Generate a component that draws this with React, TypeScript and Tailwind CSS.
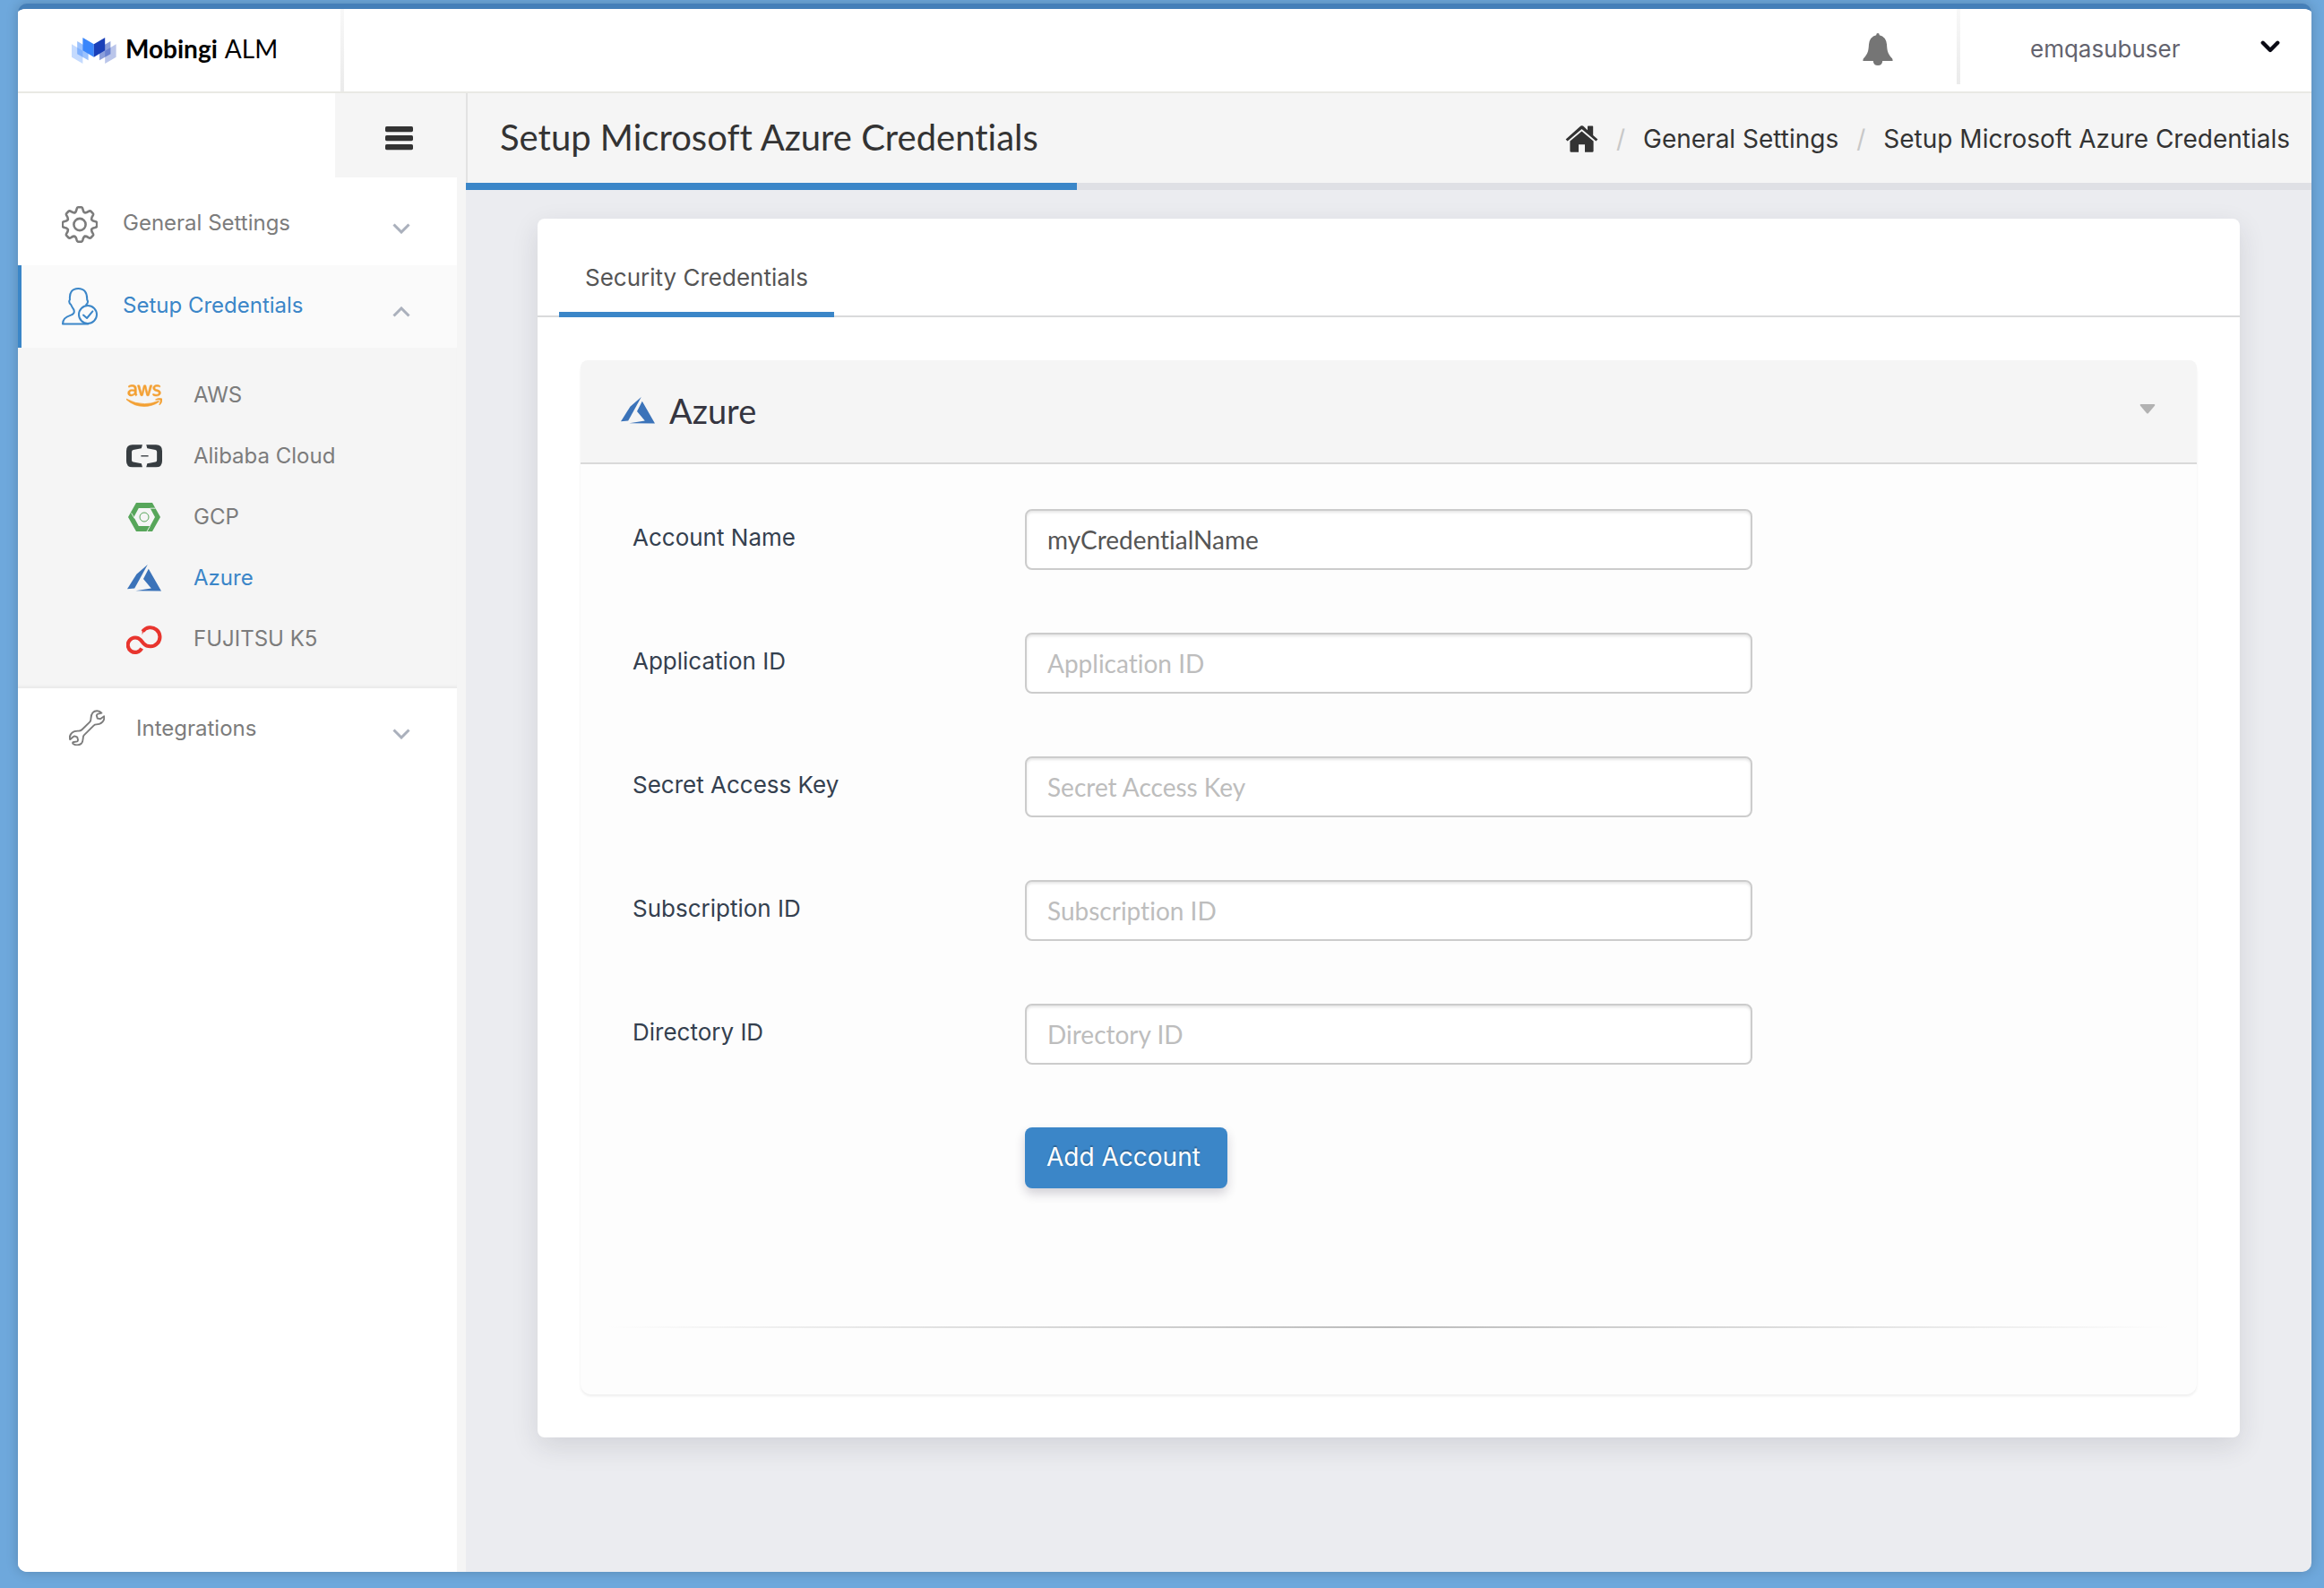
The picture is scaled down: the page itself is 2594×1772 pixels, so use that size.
import React from "react";
import { FaAws } from "react-icons/fa";

/* ---------- icons ---------- */

function MobingiMark() {
  return (
    <svg viewBox="0 0 50 29" className="h-[29px] w-[50px]" aria-hidden="true">
      <g fill="#3a86fb">
        <path d="M0 7.3 12.4 14.7V29L0 21.7Z" opacity=".3" />
        <path d="M6.2 4 18.6 11.3V25.3L6.2 18.3Z" opacity=".5" />
        <path d="M12.4 0 24.8 7.3V21.7L12.4 14.3Z" />
      </g>
      <g fill="#1a3fb8">
        <path d="M49.6 7.3 37.2 14.7V29L49.6 21.7Z" opacity=".3" />
        <path d="M43.4 4 31 11.3V25.3L43.4 18.3Z" opacity=".5" />
        <path d="M37.2 0 24.8 7.3V21.7L37.2 14.3Z" />
      </g>
    </svg>
  );
}

function BellIcon() {
  return (
    <svg viewBox="0 0 34 36" className="h-9 w-[34px]" fill="#757575" aria-hidden="true">
      <path d="M15.2 2.2Q15.2 0 17 0T18.8 2.2Q26.2 4 27 12.5C27.5 19.5 27.6 22.5 33 28.3Q33.6 29 33.6 31H.4Q.4 29 1 28.3C6.4 22.5 6.5 19.5 7 12.5Q7.8 4 15.2 2.2Z" />
      <path d="M11.8 31H22.2Q22 36 17 36T11.8 31Z" />
    </svg>
  );
}

function HomeIcon() {
  return (
    <svg viewBox="0 0 37 30" className="h-[30px] w-[37px]" fill="#333333" aria-hidden="true">
      <path d="M18.5.3Q19.4-.2 20.3.8L25 5.2V1.2Q25 .4 25.8.4H30.4Q31.2.4 31.2 1.2V10.9L36.4 15.6 34.4 17.4 18.5 3.9 2.6 17.4.6 15.6 16.8.9Q17.6.1 18.5.3Z" />
      <path d="M18.5 6.4 31.6 17.4V28.4Q31.6 29.8 30.2 29.8H22V21.2H15V29.8H6.8Q5.4 29.8 5.4 28.4V17.4Z" />
    </svg>
  );
}

function MenuIcon() {
  return (
    <svg viewBox="0 0 31 27" className="h-[27px] w-[31px]" fill="#333333" aria-hidden="true">
      <rect y="0" width="31" height="6.2" rx="1.6" />
      <rect y="10" width="31" height="6.2" rx="1.6" />
      <rect y="20" width="31" height="6.2" rx="1.6" />
    </svg>
  );
}

function ThickChevron() {
  return (
    <svg viewBox="0 0 22 14" className="h-3.5 w-[22px]" fill="none" stroke="#0a0a14" strokeWidth="4.4" strokeLinecap="round" strokeLinejoin="round" aria-hidden="true">
      <path d="M2.8 2.8 11 11 19.2 2.8" />
    </svg>
  );
}

function Chevron({ up = false }: { up?: boolean }) {
  return (
    <svg viewBox="0 0 20 12" className="h-3 w-5" fill="none" stroke="#aab0bc" strokeWidth="3" aria-hidden="true">
      <path d={up ? "M1.5 10.5 10 2 18.5 10.5" : "M1.5 1.5 10 10 18.5 1.5"} />
    </svg>
  );
}

function GearIcon() {
  const turn = (x: number, y: number, k: number) => {
    const a = (k * Math.PI) / 4;
    const px = 20 + x * Math.cos(a) - y * Math.sin(a);
    const py = 20.5 + x * Math.sin(a) + y * Math.cos(a);
    return `${px.toFixed(2)} ${py.toFixed(2)}`;
  };
  let d = "";
  for (let k = 0; k < 8; k++) {
    d += `${k ? "L" : "M"}${turn(-1.6, -19.2, k)}L${turn(1.6, -19.2, k)}`;
    d += `Q${turn(3, -19.2, k)} ${turn(3.5, -16.8, k)}`;
    d += `Q${turn(3.9, -14.4, k)} ${turn(5.4, -13.2, k)}`;
    d += `Q${turn(-3.9, -14.4, k + 1)} ${turn(-3.5, -16.8, k + 1)}`;
    d += `Q${turn(-3, -19.2, k + 1)} ${turn(-1.6, -19.2, k + 1)}`;
  }
  return (
    <svg viewBox="0 0 40 41" className="h-[41px] w-10" fill="none" stroke="currentColor" strokeWidth="2.6" strokeLinejoin="round" aria-hidden="true">
      <path d={`${d}Z`} />
      <circle cx="20" cy="20.5" r="6.6" />
    </svg>
  );
}

function UserCheckIcon() {
  return (
    <svg viewBox="0 0 40 42" className="h-[42px] w-10" fill="none" stroke="currentColor" strokeWidth="2" strokeLinejoin="round" strokeLinecap="round" aria-hidden="true">
      <path d="M27.2 19C29 17.5 29.6 15.5 28.2 13.4C28.4 5.5 25 1 18.3 1S8.2 5.5 9 13.2C7.4 15.6 8.6 17.6 10.2 19C11 21 12.2 22.8 13.4 24.6Q15 29.4 9.6 30.9C4 32.6 .9 35 1 40.6H29.4" />
      <circle cx="29" cy="30" r="10" />
      <path d="M24 30.6 28 34 34.4 26.4" />
    </svg>
  );
}

function WrenchIcon() {
  return (
    <svg viewBox="0 0 40 40" className="h-10 w-10" fill="none" stroke="currentColor" strokeWidth="1.9" strokeLinejoin="round" aria-hidden="true">
      <path d="M36.4 3.6C33.8.6 29 .4 26.4 3.4C24.6 5.6 24.6 7.8 24.4 10.4Q24.4 12.4 23 13.8L14.4 22.2Q13 23.6 11 23.6C8.2 23.8 5.8 23.6 3.6 25.4C1 27.6.4 30.6 1.2 33.2L4.6 30.2Q6 29.2 7.6 29.8L9.2 30.6 10 33.4Q10.2 34.8 9 35.4L4.4 36.2Q3.8 37.2 4.6 38C7.6 39.8 11.4 39.6 14 37.4C15.6 35.8 15.6 33.4 15.8 31Q15.8 29.4 17 28.2L27.6 17.6Q28.8 16.4 30.6 16.4C33.4 16.4 35.6 15.6 37.6 13.4C39.4 11.4 39.6 9.2 39.2 7.2L35 10.2 31.8 9.6 30.8 6.4Q31 5 32.4 4.6Z" />
    </svg>
  );
}

function AlibabaIcon() {
  return (
    <svg viewBox="0 0 41 26" className="h-[26px] w-[41px]" fill="#373d41" aria-hidden="true">
      <path d="M18.4 0H7Q0 0 0 7V18.6Q0 25.6 7 25.6H18.4L17.3 21.5 8 19.7Q6.2 19.3 6.2 17.5V8.1Q6.2 6.3 8 5.9L17.3 4Z" />
      <path d="M22.8 0H34Q41 0 41 7V18.6Q41 25.6 34 25.6H22.8L23.9 21.5 33.2 19.7Q35 19.3 35 17.5V8.1Q35 6.3 33.2 5.9L23.9 4Z" />
      <rect x="16.8" y="12.1" width="8.4" height="1.4" />
    </svg>
  );
}

function GcpIcon() {
  return (
    <svg viewBox="0 0 36 32" className="h-8 w-9" aria-hidden="true">
      <path fillRule="evenodd" fill="#57a65a" d="M9 0H27L36 16 27 32H9L0 16ZM11.8 6 6.4 16 11.8 26H24.6L30 16 24.6 6Z" />
      <path d="M24.6 6.2H30.6M3.6 11.4 7.2 17.6M21 32 24.4 26.2" stroke="#f5f5f5" strokeWidth=".9" />
      <circle cx="18" cy="16" r="5" fill="none" stroke="#57a65a" strokeWidth="1" />
    </svg>
  );
}

function AzureIcon() {
  return (
    <svg viewBox="0 0 38 30" className="h-[30px] w-[38px]" fill="#3b73b9" aria-hidden="true">
      <path d="M22.8 0 10.4 10.8 0 27.2 8.2 26.4Z" />
      <path d="M23.8 4.8 18 16 26.8 26.6 9.4 29.2 38 29.6Z" />
    </svg>
  );
}

function FujitsuIcon() {
  return (
    <svg viewBox="0 0 41 33" className="h-[33px] w-[41px]" fill="none" stroke="#e8352e" strokeWidth="4.2" aria-hidden="true">
      <path d="M18.8 7.4A10.8 10.8 0 1 1 19.8 21.2L16.4 17.2A8.4 8.4 0 1 0 17.6 26.8" />
      <path d="M18.1 4.8V11.5L19.8 7.6Z" fill="#e8352e" stroke="none" />
    </svg>
  );
}

/* ---------- data ---------- */

const providers = [
  { name: "AWS", icon: <FaAws className="size-[41px] text-[#f3a033]" stroke="#f3a033" strokeWidth="10" aria-hidden="true" />, active: false },
  { name: "Alibaba Cloud", icon: <AlibabaIcon />, active: false },
  { name: "GCP", icon: <GcpIcon />, active: false },
  { name: "Azure", icon: <AzureIcon />, active: true },
  { name: "FUJITSU K5", icon: <FujitsuIcon />, active: false },
];

const fields = [
  { id: "account-name", label: "Account Name", value: "myCredentialName" },
  { id: "application-id", label: "Application ID", value: "" },
  { id: "secret-access-key", label: "Secret Access Key", value: "" },
  { id: "subscription-id", label: "Subscription ID", value: "" },
  { id: "directory-id", label: "Directory ID", value: "" },
];

/* ---------- sections ---------- */

function TopBar() {
  return (
    <header className="flex h-[94px] border-b-2 border-[#e9e9e4] bg-white">
      <div className="flex w-[360px] items-center pb-1 pl-[60px]">
        <a href="#" className="flex items-center gap-2.5 text-black">
          <span className="pt-1"><MobingiMark /></span>
          <span className="flex items-baseline gap-2 font-['Lato',sans-serif] text-[28px] leading-9">
            <span className="font-bold">Mobingi</span>
            <span>ALM</span>
          </span>
        </a>
      </div>
      <div className="w-1 bg-linear-to-b from-[#f8f8f8] to-[#ebebeb]" />
      <div className="flex flex-1 items-center justify-end pr-[71px]">
        <button type="button" aria-label="Notifications" className="pb-0.5">
          <BellIcon />
        </button>
      </div>
      <div className="h-[84px] w-1 bg-linear-to-b from-[#f8f8f8] to-[#ebebeb]" />
      <button type="button" className="flex w-[392px] items-center justify-between pr-[35px] pb-2 pl-[78px] text-[26px] text-[#63636e]">
        <span className="pt-1">emqasubuser</span>
        <ThickChevron />
      </button>
    </header>
  );
}

function Sidebar() {
  return (
    <aside className="flex w-[500px] shrink-0 flex-col bg-[#f5f5f5] text-2xl text-[#7c7c7c]">
      <div className="flex h-[94px]">
        <div className="flex-1 bg-white" />
        <button type="button" aria-label="Toggle menu" className="flex w-[146px] items-center justify-center pt-1.5 pr-1">
          <MenuIcon />
        </button>
      </div>
      <nav className="flex flex-1 flex-col">
        <div className="mr-2.5 bg-white pt-1.5">
          <button type="button" className="flex h-[92px] w-full items-center pr-[52px] pl-[49px]">
            <GearIcon />
            <span className="flex-1 pb-0.5 pl-7 text-left">General Settings</span>
            <span className="pt-2.5"><Chevron /></span>
          </button>
        </div>
        <div className="mr-2.5 bg-[#fafafa]">
          <button type="button" aria-expanded="true" className="flex h-[92px] w-full items-center border-l-4 border-[#3b86c8] pr-[52px] pl-[45px] text-[#3b86c8]">
            <UserCheckIcon />
            <span className="flex-1 pb-0.5 pl-7 text-left">Setup Credentials</span>
            <span className="pt-3"><Chevron up /></span>
          </button>
        </div>
        <ul className="mr-2.5 pt-[19px] pb-[21px] shadow-[inset_0_-4px_4px_-3px_rgba(0,0,0,0.08)]">
          {providers.map((p) => (
            <li key={p.name}>
              <a href="#" className={p.active ? "flex h-[68px] items-center pl-[121px] text-[#3b86c8]" : "flex h-[68px] items-center pl-[121px]"}>
                <span className="flex w-[75px] items-center">
                  <span className="flex w-10 justify-center">{p.icon}</span>
                </span>
                {p.name}
              </a>
            </li>
          ))}
        </ul>
        <div className="mr-2.5 flex-1 bg-white">
          <button type="button" className="flex h-[92px] w-full items-center pr-[52px] pl-[57px]">
            <span className="pb-1"><WrenchIcon /></span>
            <span className="flex-1 pb-0.5 pl-[35px] text-left">Integrations</span>
            <span className="pt-2.5"><Chevron /></span>
          </button>
        </div>
      </nav>
    </aside>
  );
}

function PageHeader() {
  return (
    <div>
      <div className="flex h-[100px] items-center justify-between border-l-2 border-[#e2e2e2] bg-[#f5f5f5] pr-6 pl-9 text-[#333333]">
        <h1 className="pb-0.5 font-['Lato',sans-serif] text-[40px] leading-none [font-variant-ligatures:none]">
          Setup Microsoft Azure Credentials
        </h1>
        <nav aria-label="Breadcrumb" className="pt-0.5">
          <ol className="flex items-center gap-5 text-[28px]">
            <li><a href="#" aria-label="Home" className="block"><HomeIcon /></a></li>
            <li className="text-[#c8c8c8]" aria-hidden="true">/</li>
            <li><a href="#">General Settings</a></li>
            <li className="text-[#c8c8c8]" aria-hidden="true">/</li>
            <li><a href="#">Setup Microsoft Azure Credentials</a></li>
          </ol>
        </nav>
      </div>
      <div className="h-2 bg-[#dfe0e5]">
        <div className="h-full w-[33.1%] bg-[#3b86c8]" />
      </div>
    </div>
  );
}

function AzurePanel() {
  return (
    <section className="m-12 rounded-xl bg-[#fdfdfd] shadow-[0_2px_3px_rgba(0,0,0,0.07)]">
      <div className="flex h-[116px] items-center justify-between rounded-t-lg border-b-2 border-[#d9d9d9] bg-[#f5f5f5] pr-[46px] pl-[45px]">
        <h2 className="flex items-center gap-4 pb-0.5 font-['Lato',sans-serif] text-[38px] leading-none text-[#353540]">
          <AzureIcon />
          Azure
        </h2>
        <button type="button" aria-label="Collapse panel" className="pb-1.5">
          <svg viewBox="0 0 18 11" className="h-[11px] w-[18px]" fill="#b2b2b2" aria-hidden="true">
            <path d="M1.4 0H16.6Q18 .4 17 1.8L10 10Q9 11 8 10L1 1.8Q0 .4 1.4 0Z" />
          </svg>
        </button>
      </div>
      <form className="px-[30px] pt-[50px] pb-[74px]" onSubmit={(e) => e.preventDefault()}>
        <div className="grid gap-[70px]">
          {fields.map((f) => (
            <div key={f.id} className="grid h-[68px] grid-cols-12 items-center">
              <label htmlFor={f.id} className="col-span-3 pb-1.5 pl-7 text-[26px] text-[#34404f]">{f.label}</label>
              <div className="col-span-6 px-[30px]">
                <input
                  id={f.id}
                  type="text"
                  defaultValue={f.value}
                  placeholder={f.label}
                  className="h-[68px] w-full rounded-lg border-2 border-[#cccccc] bg-white px-[23px] font-['Lato',sans-serif] text-[28px] text-[#555555] shadow-[inset_0_2px_3px_rgba(0,0,0,0.1)] outline-none [font-variant-ligatures:none] placeholder:text-[#bdbdbd]"
                />
              </div>
            </div>
          ))}
          <div className="grid grid-cols-12">
            <div className="col-span-6 col-start-4 px-[30px]">
              <button type="submit" className="h-[68px] rounded-lg bg-[#3b86c8] pr-[30px] pb-0.5 pl-6 text-[28px] text-white shadow-[0_6px_12px_rgba(40,30,60,0.2)] [text-shadow:0_-2px_1px_rgba(0,0,0,0.25)]">
                Add Account
              </button>
            </div>
          </div>
        </div>
        <div className="mt-[154px] h-0.5 bg-linear-to-r from-transparent via-[#bbbbbb] to-transparent" />
      </form>
    </section>
  );
}

export default function App() {
  return (
    <div className="flex min-h-screen bg-[#6ea8dc] pt-1 pr-3.5 pb-[18px] pl-5 font-['Inter',sans-serif]">
      <div className="flex flex-1 flex-col overflow-hidden rounded-[10px] border-t-6 border-[#457fb8] bg-[#ebecf0] shadow-[0_0_14px_rgba(0,0,0,0.2)]">
        <TopBar />
        <div className="flex flex-1">
          <Sidebar />
          <main className="min-w-0 flex-1">
            <PageHeader />
            <div className="mx-20 mt-8 mb-20 flow-root rounded-lg bg-white shadow-[0_10px_30px_rgba(30,30,50,0.12)]">
              <div className="flex h-[110px] border-b-2 border-[#d9dadb] px-6" role="tablist">
                <button type="button" role="tab" aria-selected="true" className="h-[110px] border-b-6 border-[#3b86c8] px-[29px] pt-[26px] text-[26px] text-[#555555]">
                  Security Credentials
                </button>
              </div>
              <AzurePanel />
            </div>
          </main>
        </div>
      </div>
    </div>
  );
}
